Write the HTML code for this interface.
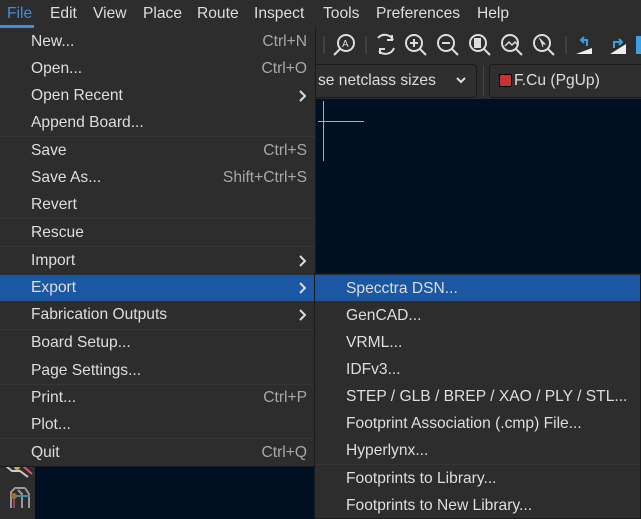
<!DOCTYPE html><html><head><style>
*{margin:0;padding:0;box-sizing:border-box}
body{width:641px;height:519px;overflow:hidden;background:#2d2d2d;font-family:"Liberation Sans",sans-serif;font-size:15.6px;color:#dedede;position:relative}
.a{position:absolute;white-space:nowrap}
.mb span{position:absolute;top:5px}
.t{position:absolute;left:31px;line-height:20px}
.s{position:absolute;right:8px;color:#a8a8a8;line-height:20px}
.ar{position:absolute;right:9px;top:0;width:8px;height:12px}
.sep{position:absolute;left:0;height:1px;background:#363636}
</style></head><body>
<div class="mb"><span style="left:7px;color:#3d8fe0">File</span><span style="left:50px">Edit</span><span style="left:93px">View</span><span style="left:143px">Place</span><span style="left:197px">Route</span><span style="left:254px">Inspect</span><span style="left:323px">Tools</span><span style="left:376px">Preferences</span><span style="left:477px">Help</span></div>
<div class="a" style="left:0;top:25px;width:34px;height:3px;background:#3d8fe0"></div>
<svg class="a" style="left:316px;top:28px" width="325" height="36" viewBox="0 0 325 36" fill="none" stroke="#ddd" stroke-width="2">
<line x1="8" y1="8" x2="8" y2="26" stroke="#555" stroke-width="1"/>
<circle cx="30" cy="15" r="8"/><line x1="24" y1="21" x2="18" y2="27"/><text x="26" y="19" font-size="10" fill="#ddd" stroke="none" font-family="Liberation Sans">A</text>
<line x1="50" y1="8" x2="50" y2="26" stroke="#555" stroke-width="1"/>
<path d="M62 10a9 9 0 0 1 15 2M78 20a9 9 0 0 1-15 3"/><path d="M76 7v5h-5M64 26v-5h5"/>
<circle cx="98" cy="15" r="8"/><line x1="104" y1="21" x2="110" y2="27"/><path d="M94 15h8M98 11v8"/>
<circle cx="130" cy="15" r="8"/><line x1="136" y1="21" x2="142" y2="27"/><path d="M126 15h8"/>
<circle cx="162" cy="15" r="8"/><line x1="168" y1="21" x2="174" y2="27"/><rect x="158" y="10" width="7" height="10" fill="#ddd" stroke="none"/>
<circle cx="194" cy="15" r="8"/><line x1="200" y1="21" x2="206" y2="27"/><path d="M189 18l4-4 3 3 3-3 3 3" stroke-width="1.5"/>
<circle cx="226" cy="15" r="8"/><line x1="232" y1="21" x2="238" y2="27"/><path d="M223 10l6 6-3 0 1 3" fill="#ddd" stroke-width="1"/>
<line x1="250" y1="8" x2="250" y2="26" stroke="#555" stroke-width="1"/>
<path d="M260 26l16 0 0-6z" fill="#eee" stroke="none"/><path d="M271 18v-6h-6M268 9l-3 3 3 3" stroke="#3aa0e0"/>
<path d="M294 26l16 0 0-10z" fill="#eee" stroke="none"/><path d="M298 20v-6h7M303 11l3 3-3 3" stroke="#3aa0e0"/>
<rect x="320" y="8" width="5" height="18" fill="#3aa0e0" stroke="none"/>
</svg>
<div class="a" style="left:300px;top:64px;width:177px;height:34px;border:1px solid #1a1a1a;border-radius:4px;background:#2f2f2f"></div>
<div class="a" style="left:318px;top:72px">se netclass sizes</div>
<svg class="a" style="left:455px;top:75px" width="12" height="10"><path d="M2 3l4 4 4-4" stroke="#ddd" stroke-width="2" fill="none"/></svg>
<div class="a" style="left:483px;top:66px;width:1px;height:30px;background:#444"></div>
<div class="a" style="left:489px;top:64px;width:160px;height:34px;border:1px solid #1a1a1a;border-radius:4px;background:#2f2f2f"></div>
<div class="a" style="left:499px;top:74px;width:13px;height:13px;background:#c83232;border:1px solid #000"></div>
<div class="a" style="left:514px;top:72px">F.Cu (PgUp)</div>
<div class="a" style="left:316px;top:99px;width:325px;height:420px;background:#001023"></div>
<div class="a" style="left:35px;top:99px;width:290px;height:420px;background:#001023"></div>
<div class="a" style="left:0;top:99px;width:35px;height:420px;background:#2d2d2d"></div>
<div class="a" style="left:323px;top:101px;width:1px;height:60px;background:#aab"></div>
<div class="a" style="left:318px;top:121px;width:46px;height:1px;background:#aab"></div>
<svg class="a" style="left:3px;top:466px" width="30" height="50" fill="none" stroke-width="2">
<path d="M3 0l6 5 8 0 8 6" stroke="#ccc"/><path d="M20 0l9 8" stroke="#e05070"/><circle cx="14" cy="1" r="3" fill="#f0a020" stroke="none"/>
<path d="M8 42V26l4-4h10M19 42V28l-4-4M26 42V28l-4-6" stroke="#999"/><path d="M11 42V30" stroke="#a04060"/><path d="M11 30h16" stroke="#3a8fb0"/><circle cx="11" cy="30" r="3" fill="#a07030" stroke="none"/>
</svg>
<div class="a" style="left:0;top:28px;width:316px;height:439px;background:#2d2d2d;border-right:1px solid #1a1a1a;border-bottom:1px solid #1a1a1a">
<div class="a" style="left:0;top:247px;width:315px;height:26px;background:#1b57a2"></div>
<div class="sep" style="top:108px;width:315px"></div><div class="sep" style="top:190px;width:315px"></div><div class="sep" style="top:218px;width:315px"></div><div class="sep" style="top:301px;width:315px"></div><div class="sep" style="top:356px;width:315px"></div><div class="sep" style="top:410px;width:315px"></div>
<div class="t" style="top:4px">New...</div><div class="s" style="top:4px">Ctrl+N</div>
<div class="t" style="top:31px">Open...</div><div class="s" style="top:31px">Ctrl+O</div>
<div class="t" style="top:58px">Open Recent</div><svg class="ar" style="top:62px"><path d="M2 1l5 5-5 5" stroke="#ddd" stroke-width="2" fill="none"/></svg>
<div class="t" style="top:85px">Append Board...</div>
<div class="t" style="top:113px">Save</div><div class="s" style="top:113px">Ctrl+S</div>
<div class="t" style="top:140px">Save As...</div><div class="s" style="top:140px">Shift+Ctrl+S</div>
<div class="t" style="top:167px">Revert</div>
<div class="t" style="top:195px">Rescue</div>
<div class="t" style="top:223px">Import</div><svg class="ar" style="top:227px"><path d="M2 1l5 5-5 5" stroke="#ddd" stroke-width="2" fill="none"/></svg>
<div class="t" style="top:250px">Export</div><svg class="ar" style="top:254px"><path d="M2 1l5 5-5 5" stroke="#ddd" stroke-width="2" fill="none"/></svg>
<div class="t" style="top:277px">Fabrication Outputs</div><svg class="ar" style="top:281px"><path d="M2 1l5 5-5 5" stroke="#ddd" stroke-width="2" fill="none"/></svg>
<div class="t" style="top:305px">Board Setup...</div>
<div class="t" style="top:333px">Page Settings...</div>
<div class="t" style="top:360px">Print...</div><div class="s" style="top:360px">Ctrl+P</div>
<div class="t" style="top:387px">Plot...</div>
<div class="t" style="top:415px">Quit</div><div class="s" style="top:415px">Ctrl+Q</div>
</div>
<div class="a" style="left:314px;top:273px;width:327px;height:246px;background:#2d2d2d;border:1px solid #1a1a1a">
<div class="a" style="left:0;top:1px;width:325px;height:26px;background:#1b57a2"></div>
<div class="sep" style="top:190px;width:325px"></div>
<div class="t" style="left:31px;top:5px">Specctra DSN...</div>
<div class="t" style="left:31px;top:32px">GenCAD...</div>
<div class="t" style="left:31px;top:59px">VRML...</div>
<div class="t" style="left:31px;top:86px">IDFv3...</div>
<div class="t" style="left:31px;top:113px">STEP / GLB / BREP / XAO / PLY / STL...</div>
<div class="t" style="left:31px;top:140px">Footprint Association (.cmp) File...</div>
<div class="t" style="left:31px;top:167px">Hyperlynx...</div>
<div class="t" style="left:31px;top:195px">Footprints to Library...</div>
<div class="t" style="left:31px;top:222px">Footprints to New Library...</div>
</div>
</body></html>
